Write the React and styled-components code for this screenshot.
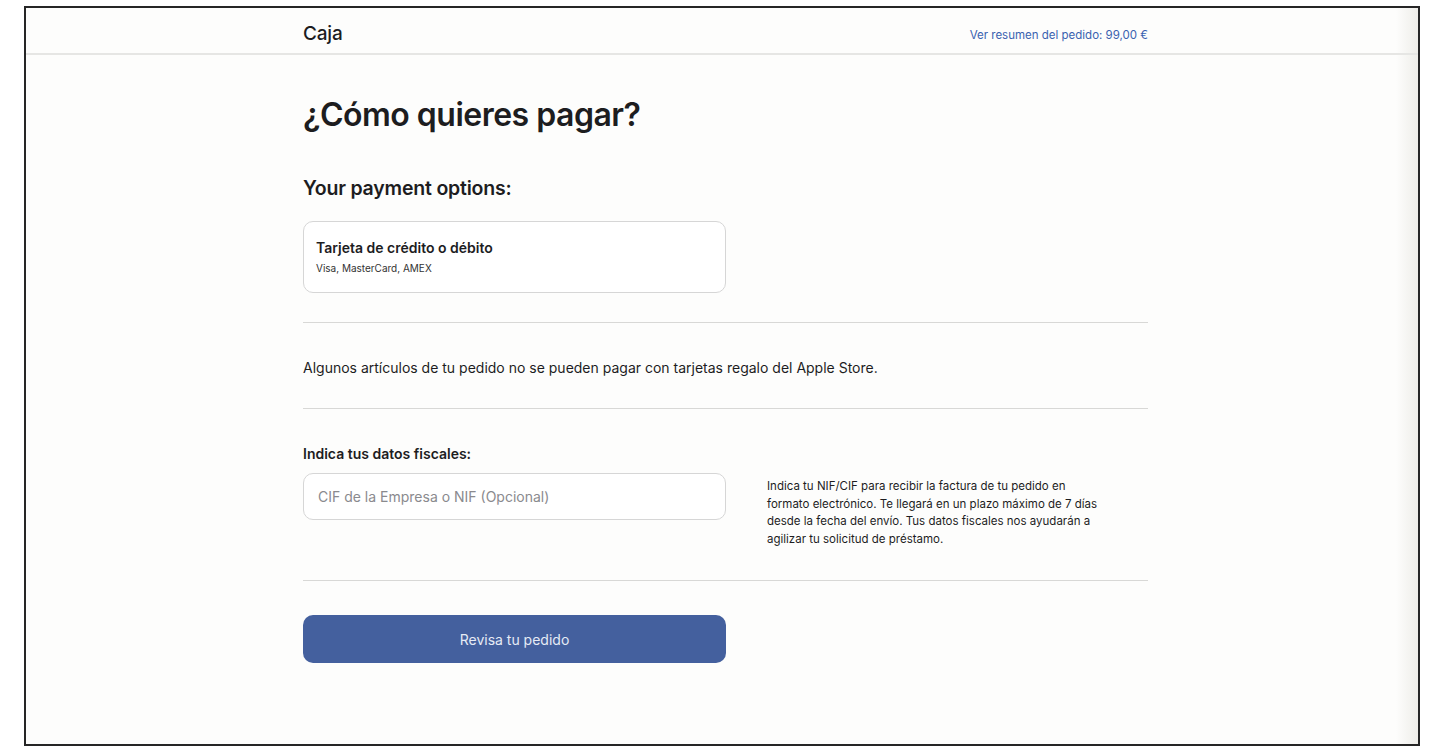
import React from 'react';
import styled, { createGlobalStyle } from 'styled-components';

const GlobalStyle = createGlobalStyle`
    html, body {
        margin: 0;
        padding: 0;
        background: #ffffff;
    }
    body {
        font-family: Inter, "Noto Sans", "Liberation Sans", sans-serif;
        color: #1d1d1f;
    }
`

const Page = styled.div`
    width: 1438px;
    height: 753px;
    padding: 6px 18px 7px 24px;
    box-sizing: border-box;
`
const Frame = styled.div`
    height: 100%;
    box-sizing: border-box;
    border: 2px solid #262626;
    background: linear-gradient(to right, #fdfdfc calc(100% - 22px), #eeede9);
    display: flex;
    flex-direction: column;
`
const Header = styled.header`
    height: 47px;
    border-bottom: 2px solid #e6e6e4;
    display: flex;
    align-items: center;
    justify-content: space-between;
    padding: 5px 270px 0 277px;
    box-sizing: border-box;
`
const Brand = styled.span`
    font-size: 19px;
    font-weight: 500;
    color: #1d1d1f;
    letter-spacing: -0.2px;
`
const SummaryLink = styled.a`
    font-size: 11.5px;
    color: #3a62b0;
    text-decoration: none;
    margin-top: 3px;
`
const Main = styled.main`
    width: 845px;
    padding-left: 277px;
    display: flex;
    flex-direction: column;
`
const Title = styled.h1`
    margin: 40px 0 0;
    font-size: 32px;
    font-weight: 600;
    letter-spacing: -0.5px;
    line-height: 40px;
`
const SubTitle = styled.h2`
    margin: 41px 0 0;
    font-size: 19.5px;
    font-weight: 600;
    letter-spacing: -0.2px;
    line-height: 24px;
`
const OptionCard = styled.div`
    width: 423px;
    height: 72px;
    box-sizing: border-box;
    margin-top: 21px;
    border: 1px solid #d6d6d6;
    border-radius: 10px;
    background: #ffffff;
    padding: 17px 12px 0;
`
const OptionTitle = styled.div`
    font-size: 14px;
    font-weight: 600;
    line-height: 18px;
`
const OptionSub = styled.div`
    font-size: 10px;
    line-height: 12px;
    color: #333;
    margin-top: 5px;
`
const Divider = styled.hr`
    border: none;
    border-top: 1px solid #d8d8d6;
    margin: ${p => p.$top}px 0 0;
    width: 100%;
`
const Notice = styled.p`
    margin: 36px 0 0;
    font-size: 14px;
    line-height: 18px;
    color: #1d1d1f;
`
const FiscalRow = styled.div`
    display: flex;
    gap: 41px;
    margin-top: 36px;
`
const FiscalCol = styled.div`
    display: flex;
    flex-direction: column;
    width: 423px;
`
const Label = styled.label`
    font-size: 14px;
    font-weight: 600;
    line-height: 18px;
`
const Input = styled.input`
    margin-top: 10px;
    height: 47px;
    box-sizing: border-box;
    border: 1px solid #d6d6d6;
    border-radius: 10px;
    background: #ffffff;
    padding: 0 14px;
    font-family: inherit;
    font-size: 14px;
    outline: none;
    &::placeholder {
        color: #8a8a8e;
    }
`
const Help = styled.p`
    margin: 33px 0 0;
    width: 340px;
    font-size: 11.5px;
    line-height: 17.5px;
    color: #1d1d1f;
`
const ReviewButton = styled.button`
    margin-top: 34px;
    width: 423px;
    height: 48px;
    border: none;
    border-radius: 10px;
    background: #44609e;
    color: #e6ebf5;
    font-family: inherit;
    font-size: 14px;
    cursor: pointer;
`

export default function App() {
    return (
        <Page>
            <GlobalStyle />
            <Frame>
                <Header>
                    <Brand>Caja</Brand>
                    <SummaryLink href="#">Ver resumen del pedido: 99,00 €</SummaryLink>
                </Header>
                <Main>
                    <Title>¿Cómo quieres pagar?</Title>
                    <SubTitle>Your payment options:</SubTitle>
                    <OptionCard>
                        <OptionTitle>Tarjeta de crédito o débito</OptionTitle>
                        <OptionSub>Visa, MasterCard, AMEX</OptionSub>
                    </OptionCard>
                    <Divider $top={29} />
                    <Notice>Algunos artículos de tu pedido no se pueden pagar con tarjetas regalo del Apple Store.</Notice>
                    <Divider $top={31} />
                    <FiscalRow>
                        <FiscalCol>
                            <Label>Indica tus datos fiscales:</Label>
                            <Input placeholder="CIF de la Empresa o NIF (Opcional)" />
                        </FiscalCol>
                        <Help>
                            Indica tu NIF/CIF para recibir la factura de tu pedido en formato electrónico. Te llegará en un plazo máximo de 7 días desde la fecha del envío. Tus datos fiscales nos ayudarán a agilizar tu solicitud de préstamo.
                        </Help>
                    </FiscalRow>
                    <Divider $top={32} />
                    <ReviewButton>Revisa tu pedido</ReviewButton>
                </Main>
            </Frame>
        </Page>
    );
}
